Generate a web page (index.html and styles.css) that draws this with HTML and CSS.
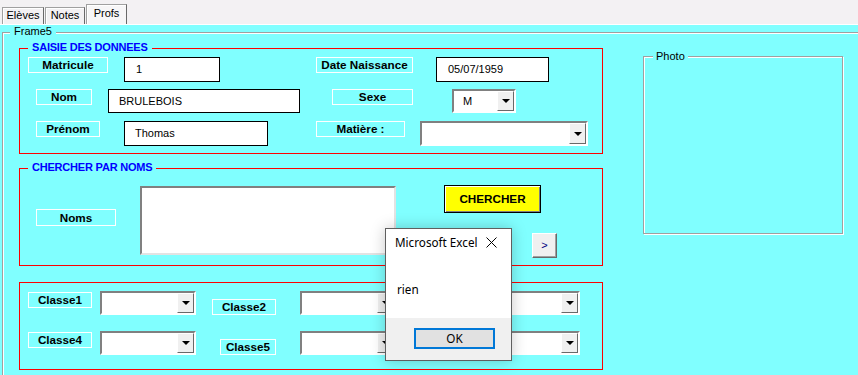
FILE: index.html
```html
<!DOCTYPE html>
<html lang="fr">
<head>
  <meta charset="UTF-8" />
  <title>Profs</title>
  <link rel="stylesheet" href="styles.css">
</head>
<body>
  <!-- Onglets -->
  <div class="tabs">
    <div class="tab tab-eleves">Elèves</div>
    <div class="tab tab-notes">Notes</div>
    <div class="tab tab-profs">Profs</div>
  </div>

  <!-- Frame5 -->
  <div class="frame5">
    <span class="caption">Frame5</span>

    <div class="left">
      <!-- Saisie -->
      <div class="group g-saisie">
        <span class="caption group-title">SAISIE DES DONNEES</span>
        <div class="row">
          <span class="lbl lbl-matricule">Matricule</span>
          <div class="txt txt-matricule">1</div>
          <span class="lbl lbl-date">Date Naissance</span>
          <div class="txt txt-date">05/07/1959</div>
        </div>
        <div class="row">
          <span class="lbl lbl-nom">Nom</span>
          <div class="txt txt-nom">BRULEBOIS</div>
          <span class="lbl lbl-sexe">Sexe</span>
          <div class="combo combo-sexe"><span>M</span><span class="drop"></span></div>
        </div>
        <div class="row">
          <span class="lbl lbl-prenom">Prénom</span>
          <div class="txt txt-prenom">Thomas</div>
          <span class="lbl lbl-matiere">Matière :</span>
          <div class="combo combo-matiere"><span></span><span class="drop"></span></div>
        </div>
      </div>

      <!-- Recherche -->
      <div class="group g-chercher">
        <span class="caption group-title">CHERCHER PAR NOMS</span>
        <span class="lbl lbl-noms">Noms</span>
        <div class="listbox"></div>
        <div class="btn-col">
          <div class="btn-chercher">CHERCHER</div>
          <div class="btn-next">&gt;</div>
        </div>
      </div>

      <!-- Classes -->
      <div class="group g-classes">
        <div class="row">
          <span class="lbl lbl-classe">Classe1</span>
          <div class="combo combo-classe"><span></span><span class="drop"></span></div>
          <span class="lbl lbl-classe lbl-classe2">Classe2</span>
          <div class="combo combo-classe combo-mid"><span></span><span class="drop"></span></div>
          <div class="combo combo-classe combo-last"><span></span><span class="drop"></span></div>
        </div>
        <div class="row">
          <span class="lbl lbl-classe">Classe4</span>
          <div class="combo combo-classe"><span></span><span class="drop"></span></div>
          <span class="lbl lbl-classe lbl-classe5">Classe5</span>
          <div class="combo combo-classe combo-mid"><span></span><span class="drop"></span></div>
          <div class="combo combo-classe combo-last"><span></span><span class="drop"></span></div>
        </div>
      </div>
    </div>

    <!-- Photo -->
    <div class="photo">
      <span class="caption photo-title">Photo</span>
    </div>
  </div>

  <!-- MsgBox -->
  <div class="msgbox">
    <div class="msgbox-head">
      <span>Microsoft Excel</span>
      <svg width="11" height="11" viewBox="0 0 11 11">
        <path d="M0.5 0.5 L10.5 10.5 M10.5 0.5 L0.5 10.5" stroke="#000" stroke-width="1" fill="none"/>
      </svg>
    </div>
    <div class="msgbox-body">rien</div>
    <div class="msgbox-foot">
      <div class="btn-ok">OK</div>
    </div>
  </div>
</body>
</html>
```

FILE: styles.css
```css
* {
  box-sizing: border-box;
}

body {
  margin: 0;
  width: 858px;
  height: 375px;
  overflow: hidden;
  position: relative;
  font-family: "Liberation Sans", Arial, sans-serif;
  font-size: 11px;
  color: #000;
  background: #80ffff;
}

/* onglets */
.tabs {
  height: 25px;
  display: flex;
  align-items: flex-end;
  padding-left: 2px;
  background: #f3f1f3;
  border-bottom: 1px solid #fff;
}

.tab {
  height: 17px;
  margin-right: 1px;
  border: 1px solid #a0a0a0;
  border-bottom: none;
  border-right-color: #696969;
  box-shadow: inset 1px 1px 0 #fff;
  text-align: center;
  line-height: 15px;
}

.tab-eleves { width: 42px; }
.tab-notes { width: 40px; }
.tab-profs {
  width: 41px;
  height: 20px;
  line-height: 16px;
  background: #f7f6f7;
}

/* cadres */
.frame5 {
  position: relative;
  display: flex;
  align-items: flex-start;
  width: 856px;
  height: 343px;
  margin: 7px 0 0 2px;
  border: 1px solid #a0a0a0;
  border-right: none;
  border-bottom: none;
  box-shadow: inset 1px 1px 0 #fff;
}

.caption {
  position: absolute;
  top: -8px;
  left: 7px;
  padding: 0 4px;
  line-height: 13px;
  background: #80ffff;
  white-space: nowrap;
}

.group-title {
  left: 8px;
  color: #0000ff;
  font-weight: bold;
  letter-spacing: -0.2px;
}

.left {
  width: 584px;
  margin: 15px 0 0 16px;
}

.group {
  position: relative;
  border: 1px solid #ff0000;
}

.g-saisie {
  height: 106px;
  padding-top: 8px;
  display: flex;
  flex-direction: column;
  gap: 7px;
}

.g-chercher {
  height: 98px;
  margin-top: 14px;
  display: flex;
  align-items: flex-start;
}

.g-classes {
  height: 88px;
  margin-top: 16px;
  padding-top: 8px;
  display: flex;
  flex-direction: column;
  gap: 16px;
}

.row {
  height: 25px;
  display: flex;
  align-items: flex-start;
}

.g-classes .row {
  height: 24px;
}

.photo {
  position: relative;
  width: 200px;
  height: 178px;
  margin: 23px 0 0 40px;
  border: 1px solid #a0a0a0;
  box-shadow: inset 1px 1px 0 #fff, 1px 1px 0 #fff;
}

.photo-title {
  top: -7px;
  left: 9px;
  padding: 0 3px;
}

/* etiquettes */
.lbl {
  height: 16px;
  border: 1px solid #fff;
  font-size: 11.7px;
  font-weight: bold;
  line-height: 14px;
  text-align: center;
  white-space: nowrap;
}

.lbl-matricule { width: 80px; margin-left: 8px; }
.lbl-date { width: 97px; margin-left: 96px; }
.lbl-nom { width: 56px; margin-left: 16px; }
.lbl-sexe { width: 81px; margin-left: 32px; }
.lbl-prenom { width: 64px; margin-left: 16px; }
.lbl-matiere { width: 89px; margin-left: 48px; }
.lbl-noms { width: 80px; height: 17px; margin: 40px 0 0 16px; line-height: 15px; }
.lbl-classe { width: 64px; margin: 1px 0 0 8px; }
.lbl-classe2 { margin: 8px 0 0 16px; }
.lbl-classe5 { width: 56px; margin: 8px 0 0 24px; }

/* zones de texte */
.txt {
  height: 25px;
  padding-left: 10px;
  border: 1px solid #000;
  background: #fff;
  line-height: 23px;
}

.txt-matricule { width: 96px; margin-left: 16px; padding-left: 11px; }
.txt-date { width: 113px; margin-left: 23px; padding-left: 11px; }
.txt-nom { width: 192px; margin-left: 16px; height: 24px; line-height: 22px; }
.txt-prenom { width: 144px; margin-left: 24px; }

/* listes deroulantes */
.combo {
  height: 24px;
  display: flex;
  justify-content: space-between;
  padding-left: 9px;
  border: 2px solid;
  border-color: #808080 #fff #fff #808080;
  background: #fff;
  line-height: 20px;
}

.drop {
  width: 17px;
  display: flex;
  align-items: center;
  justify-content: center;
  background: #f0f0f0;
  border: 1px solid;
  border-color: #fff #696969 #696969 #fff;
}

.drop::after {
  content: "";
  border-left: 4px solid transparent;
  border-right: 4px solid transparent;
  border-top: 4px solid #000;
}

.combo-sexe { width: 64px; margin-left: 39px; }
.combo-matiere { width: 168px; height: 25px; margin-left: 15px; }
.combo-classe { width: 96px; margin-left: 8px; }
.combo-mid { margin-left: 24px; }
.combo-last { margin-left: 88px; }

.listbox {
  width: 256px;
  height: 69px;
  margin: 17px 0 0 24px;
  border: 2px solid;
  border-color: #808080 #e3e3e3 #e3e3e3 #808080;
  background: #fff;
}

/* boutons */
.btn-col {
  display: flex;
  flex-direction: column;
  align-items: flex-start;
  margin: 16px 0 0 48px;
}

.btn-chercher {
  width: 97px;
  height: 28px;
  border: 1px solid #000;
  background: #ffff00;
  box-shadow: inset 1px 1px 0 #fff, inset -1px -1px 0 #808080;
  font-size: 11.7px;
  font-weight: bold;
  line-height: 26px;
  text-align: center;
}

.btn-next {
  width: 25px;
  height: 25px;
  margin: 20px 0 0 88px;
  border: 1px solid;
  border-color: #fff #696969 #696969 #fff;
  box-shadow: inset -1px -1px 0 #a0a0a0;
  background: #f0f0f0;
  color: #000080;
  line-height: 23px;
  text-align: center;
}

/* boite de message */
.msgbox {
  position: absolute;
  left: 385px;
  top: 228px;
  width: 127px;
  height: 133px;
  display: flex;
  flex-direction: column;
  border: 1px solid #5f5f5f;
  background: #fff;
  box-shadow: 0 0 14px rgba(0, 0, 0, 0.22);
  font-family: "Noto Sans", sans-serif;
  font-size: 11.7px;
}

.msgbox-head {
  height: 26px;
  display: flex;
  align-items: center;
  justify-content: space-between;
  padding: 0 14px 0 9px;
}

.msgbox-body {
  flex: 1;
  padding: 26px 0 0 11px;
  line-height: 16px;
}

.msgbox-foot {
  height: 42px;
  padding: 10px 0 0 28px;
  background: #f0f0f0;
}

.btn-ok {
  width: 81px;
  height: 21px;
  border: 2px solid #0078d7;
  background: #e1e1e1;
  line-height: 17px;
  text-align: center;
}
```
